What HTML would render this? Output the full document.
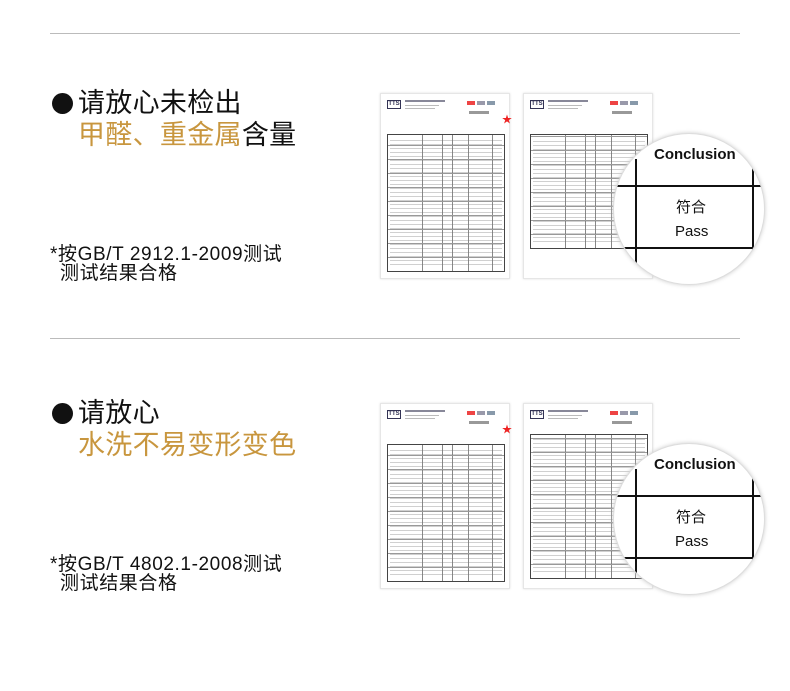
<!DOCTYPE html>
<html><head><meta charset="utf-8"><style>
*{margin:0;padding:0;box-sizing:border-box}
body{width:790px;height:691px;background:#fff;position:relative;overflow:hidden;font-family:"Liberation Sans","Noto Sans CJK SC",sans-serif;color:#111}
.hr{position:absolute;left:50px;width:690px;height:1px;background:#bbb}
.h{position:absolute;left:78px;font-size:27px;line-height:32px;white-space:nowrap;letter-spacing:0.3px}
.dot{position:absolute;left:52px;width:21px;height:21px;border-radius:50%;background:#111}
.g{color:#c8963e}
.f{position:absolute;left:50px;font-size:19px;line-height:19px;white-space:nowrap;letter-spacing:0.6px}
.doc{position:absolute;width:130px;height:186px;background:#fff;border:1px solid #e6e6e6;box-shadow:0 0 2px #ddd}
.doc .logo{position:absolute;left:6px;top:6px;width:14px;height:9px;border:1px solid #335;font-size:6px;line-height:7px;color:#335;text-align:center;font-weight:bold}
.doc .t1{position:absolute;left:24px;top:6px;width:40px;height:2px;background:#889}
.doc .t2{position:absolute;left:24px;top:11px;width:34px;height:1px;background:#bbb}
.doc .t3{position:absolute;left:24px;top:14px;width:30px;height:1px;background:#bbb}
.doc .ti{position:absolute;left:88px;top:17px;width:20px;height:3px;background:#999}
.doc .rd{position:absolute;left:86px;top:7px;width:28px;height:4px;background:linear-gradient(90deg,#e44 0 8px,#fff 8px 10px,#99a 10px 18px,#fff 18px 20px,#89a 20px)}
.doc .tb{position:absolute;left:6px;top:40px;width:118px;height:138px;border:1px solid #444;
background:repeating-linear-gradient(0deg,transparent 0 13px,#999 13px 14px),
linear-gradient(90deg,transparent 34px,#888 34px 35px,transparent 35px 54px,#888 54px 55px,transparent 55px 64px,#888 64px 65px,transparent 65px 80px,#888 80px 81px,transparent 81px 104px,#888 104px 105px,transparent 105px)}
.doc .tb i{position:absolute;left:2px;right:2px;top:3px;bottom:3px;background:repeating-linear-gradient(0deg,transparent 0 3px,rgba(120,120,120,.35) 3px 4px)}
.mag{position:absolute;width:152px;height:152px;border-radius:50%;background:#fff;border:1px solid #ddd;overflow:hidden;box-shadow:0 0 4px #ccc}
.mag .c{position:absolute;left:40px;top:12px;font-weight:bold;font-size:15px;color:#111}
.mag .vl{position:absolute;width:2px;background:#111}
.mag .hl{position:absolute;height:2px;background:#111}
.mag .z{position:absolute;left:62px;font-size:15px}
.star{position:absolute;color:#e22;font-size:10px}
</style></head><body>
<div class="hr" style="top:33px"></div>
<div class="hr" style="top:338px"></div>

<div class="dot" style="top:93px"></div>
<div class="h" style="top:87px">请放心未检出</div>
<div class="h" style="top:119px"><span class="g">甲醛、重金属</span>含量</div>
<div class="f" style="top:245px">*按GB/T 2912.1-2009测试</div>
<div class="f" style="top:264px;left:60px">测试结果合格</div>

<div class="doc" style="left:380px;top:93px"><div class="logo">TTS</div><div class="t1"></div><div class="t2"></div><div class="t3"></div><div class="rd"></div><div class="ti"></div><div class="tb"><i></i></div><span class="star" style="left:121px;top:17px">★</span></div>
<div class="doc" style="left:523px;top:93px"><div class="logo">TTS</div><div class="t1"></div><div class="t2"></div><div class="t3"></div><div class="rd"></div><div class="ti"></div><div class="tb" style="height:115px"><i></i></div></div>
<div class="mag" style="left:613px;top:133px">
<div class="c">Conclusion</div>
<div class="vl" style="left:21px;top:25px;height:110px"></div>
<div class="vl" style="left:138px;top:25px;height:110px"></div>
<div class="hl" style="left:0;right:0;top:51px"></div>
<div class="hl" style="left:0;right:0;top:113px"></div>
<div class="z" style="top:62px">符合</div>
<div class="z" style="top:89px;left:61px">Pass</div>
</div>

<div class="dot" style="top:403px"></div>
<div class="h" style="top:397px">请放心</div>
<div class="h g" style="top:429px">水洗不易变形变色</div>
<div class="f" style="top:555px">*按GB/T 4802.1-2008测试</div>
<div class="f" style="top:574px;left:60px">测试结果合格</div>

<div class="doc" style="left:380px;top:403px"><div class="logo">TTS</div><div class="t1"></div><div class="t2"></div><div class="t3"></div><div class="rd"></div><div class="ti"></div><div class="tb"><i></i></div><span class="star" style="left:121px;top:17px">★</span></div>
<div class="doc" style="left:523px;top:403px"><div class="logo">TTS</div><div class="t1"></div><div class="t2"></div><div class="t3"></div><div class="rd"></div><div class="ti"></div><div class="tb" style="top:30px;height:145px"><i></i></div></div>
<div class="mag" style="left:613px;top:443px">
<div class="c">Conclusion</div>
<div class="vl" style="left:21px;top:25px;height:110px"></div>
<div class="vl" style="left:138px;top:25px;height:110px"></div>
<div class="hl" style="left:0;right:0;top:51px"></div>
<div class="hl" style="left:0;right:0;top:113px"></div>
<div class="z" style="top:62px">符合</div>
<div class="z" style="top:89px;left:61px">Pass</div>
</div>
</body></html>
